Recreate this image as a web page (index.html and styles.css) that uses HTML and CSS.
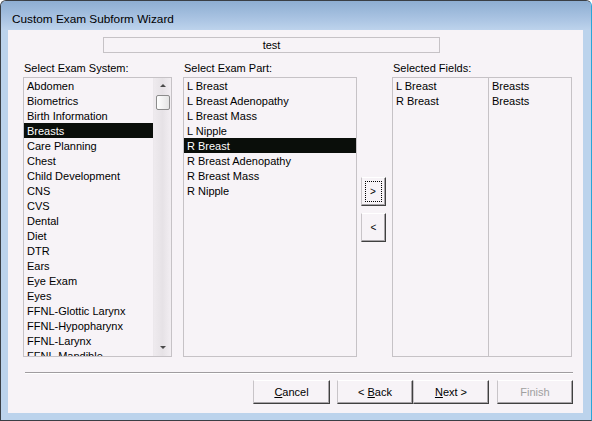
FILE: index.html
```html
<!DOCTYPE html>
<html>
<head>
<meta charset="utf-8">
<link rel="stylesheet" href="styles.css">
</head>
<body>
<div class="window">
  <div class="titlebar">Custom Exam Subform Wizard</div>
  <div class="frame">
    <div class="client">
      <div class="namebox">test</div>
      <div class="columns">
        <div class="col col-system">
          <div class="label">Select Exam System:</div>
          <div class="list list-system">
            <div class="items">
              <div class="item">Abdomen</div>
              <div class="item">Biometrics</div>
              <div class="item">Birth Information</div>
              <div class="item sel">Breasts</div>
              <div class="item">Care Planning</div>
              <div class="item">Chest</div>
              <div class="item">Child Development</div>
              <div class="item">CNS</div>
              <div class="item">CVS</div>
              <div class="item">Dental</div>
              <div class="item">Diet</div>
              <div class="item">DTR</div>
              <div class="item">Ears</div>
              <div class="item">Eye Exam</div>
              <div class="item">Eyes</div>
              <div class="item">FFNL-Glottic Larynx</div>
              <div class="item">FFNL-Hypopharynx</div>
              <div class="item">FFNL-Larynx</div>
              <div class="item">FFNL-Mandible</div>
            </div>
            <div class="scrollbar">
              <div class="arrow up"></div>
              <div class="thumb"></div>
              <div class="track"></div>
              <div class="arrow down"></div>
            </div>
          </div>
        </div>
        <div class="col col-part">
          <div class="label">Select Exam Part:</div>
          <div class="list list-part">
            <div class="items">
              <div class="item">L Breast</div>
              <div class="item">L Breast Adenopathy</div>
              <div class="item">L Breast Mass</div>
              <div class="item">L Nipple</div>
              <div class="item sel">R Breast</div>
              <div class="item">R Breast Adenopathy</div>
              <div class="item">R Breast Mass</div>
              <div class="item">R Nipple</div>
            </div>
          </div>
        </div>
        <div class="col col-move">
          <div class="btn small focus"><span>&gt;</span></div>
          <div class="btn small"><span>&lt;</span></div>
        </div>
        <div class="col col-fields">
          <div class="label">Selected Fields:</div>
          <div class="list list-fields">
            <div class="fcol fcol1">
              <div class="item">L Breast</div>
              <div class="item">R Breast</div>
            </div>
            <div class="fcol fcol2">
              <div class="item">Breasts</div>
              <div class="item">Breasts</div>
            </div>
          </div>
        </div>
      </div>
      <div class="separator"></div>
      <div class="buttons">
        <div class="btn wide"><span><u>C</u>ancel</span></div>
        <div class="pair">
          <div class="btn wide"><span>&lt; <u>B</u>ack</span></div>
          <div class="btn wide"><span><u>N</u>ext &gt;</span></div>
        </div>
        <div class="btn wide disabled"><span>Finish</span></div>
      </div>
    </div>
  </div>
</div>
</body>
</html>
```
FILE: styles.css
```css
html, body {
  margin: 0;
  padding: 0;
  background: #ffffff;
}
.window {
  width: 592px;
  height: 421px;
  box-sizing: border-box;
  border: 1px solid #3a3f45;
  border-right-color: #2aa6d8;
  border-radius: 6px 6px 0 0;
  background: #bcd3ec;
  display: flex;
  flex-direction: column;
  font-family: "Liberation Sans", Arial, sans-serif;
  overflow: hidden;
}
.titlebar {
  height: 29px;
  flex: none;
  box-sizing: border-box;
  padding: 10px 0 0 11px;
  font-size: 11.8px;
  line-height: 16px;
  color: #000;
  background: linear-gradient(#8eaed2, #a9c3e2 60%, #bdd3ec);
}
.frame {
  flex: 1;
  padding: 0 7px 6px 7px;
  display: flex;
}
.client {
  width: 575px;
  height: 383px;
  background: #f7f3f7;
  display: flex;
  flex-direction: column;
  font-size: 11px;
  color: #000;
}
.namebox {
  margin: 7px 0 0 95px;
  width: 337px;
  height: 16px;
  box-sizing: border-box;
  border: 1px solid #c6c2c6;
  text-align: center;
  line-height: 14px;
  font-size: 11px;
  flex: none;
}
.columns {
  display: flex;
  margin: 8px 0 0 15px;
  flex: none;
}
.col {
  display: flex;
  flex-direction: column;
}
.label {
  height: 16px;
  line-height: 15px;
  padding-left: 1px;
  flex: none;
}
.col-system { width: 149px; }
.col-part { width: 174px; margin-left: 11px; }
.col-move { width: 25px; margin-left: 4px; padding-top: 116px; gap: 7px; }
.col-fields { width: 180px; margin-left: 6px; }
.list {
  height: 280px;
  flex: none;
  box-sizing: border-box;
  border: 1px solid #c6c2c6;
  background: #f7f3f7;
  overflow: hidden;
  display: flex;
}
.items {
  flex: 1;
  overflow: hidden;
}
.item {
  height: 15px;
  line-height: 16px;
  padding-left: 3px;
  white-space: nowrap;
}
.item.sel {
  background: #0a0e0a;
  color: #ffffff;
}
.scrollbar {
  width: 17px;
  flex: none;
  display: flex;
  flex-direction: column;
  align-items: center;
  background: linear-gradient(90deg, #eeeaee, #e6e2e6 50%, #f2eef2);
  border-left: 1px solid #ece8ec;
}
.arrow {
  width: 0;
  height: 0;
  border-left: 3px solid transparent;
  border-right: 3px solid transparent;
  flex: none;
}
.arrow.up {
  margin-top: 6px;
  border-bottom: 3px solid #4a4a4a;
}
.arrow.down {
  margin-bottom: 7px;
  border-top: 3px solid #4a4a4a;
}
.thumb {
  margin-top: 8px;
  width: 14px;
  height: 15px;
  box-sizing: border-box;
  border: 1px solid #8c8c8c;
  border-radius: 2px;
  background: linear-gradient(90deg, #ffffff, #e4e4e4);
  flex: none;
}
.track { flex: 1; }
.list-fields { display: flex; }
.fcol1 {
  width: 95px;
  border-right: 1px solid #c6c2c6;
}
.fcol2 { flex: 1; }
.btn {
  box-sizing: border-box;
  background: #f7f3f7;
  border-top: 1px solid #ffffff;
  border-left: 1px solid #c8c4c8;
  border-right: 1px solid #404040;
  border-bottom: 1px solid #404040;
  box-shadow: inset -1px -1px 0 #a8a4a8;
  display: flex;
  align-items: center;
  justify-content: center;
  font-size: 11px;
  flex: none;
}
.btn.small {
  width: 25px;
  height: 29px;
  font-size: 10px;
}
.btn.focus span {
  width: 17px;
  height: 21px;
  margin-right: 1px;
  margin-bottom: 1px;
  border: 1px dotted #000;
  box-sizing: border-box;
  display: flex;
  align-items: center;
  justify-content: center;
}
.separator {
  margin: 15px 0 0 17px;
  width: 548px;
  height: 1px;
  background: #a09ca0;
  border-bottom: 1px solid #ffffff;
  flex: none;
}
.buttons {
  display: flex;
  margin: 6px 0 0 245px;
  gap: 7px;
}
.pair { display: flex; }
.btn.wide {
  width: 77px;
  height: 24px;
}
.pair .btn.wide { width: 76px; }
.buttons > .btn.wide:last-child { width: 76px; margin-left: 1px; }
.btn.disabled { color: #a0a0a0; }
u { text-decoration: underline; text-underline-offset: 1px; }
```
